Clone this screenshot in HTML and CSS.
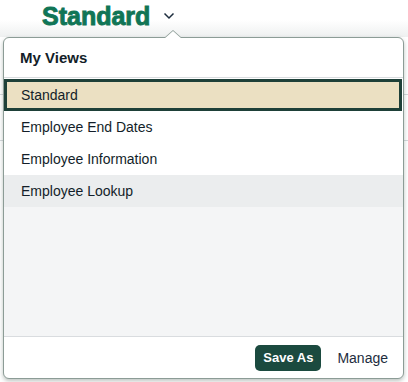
FILE: index.html
```html
<!doctype html>
<html lang="en">
<head>
<meta charset="utf-8" />
<title>My Views</title>
<link rel="stylesheet" href="styles.css">
</head>
<body>

<div class="page">
	<header class="title-bar">
		<h1 class="title">Standard</h1>
		<svg class="chevron" width="12" height="8" viewBox="0 0 12 8">
			<path d="M1.5 1.5 L6 6 L10.5 1.5" fill="none" stroke="#1d2d3e" stroke-width="1.5" />
		</svg>
	</header>

	<div class="backdrop">
		<div class="bd-row first"></div>
		<div class="bd-row"></div>
	</div>

	<div class="popover">
		<div class="pop-head">My Views</div>
		<ul class="views">
			<li class="view selected">Standard</li>
			<li class="view">Employee End Dates</li>
			<li class="view">Employee Information</li>
			<li class="view hover">Employee Lookup</li>
		</ul>
		<div class="filler"></div>
		<footer class="pop-foot">
			<button class="btn primary">Save As</button>
			<button class="btn plain">Manage</button>
		</footer>
	</div>
</div>

</body>
</html>
```

FILE: styles.css
```css
body {
	margin: 0;
	background: #fff;
	font-family: "Liberation Sans", Arial, sans-serif;
	color: #1d2d3e;
}

.page {
	position: relative;
	width: 408px;
	height: 382px;
	overflow: hidden;
}

.title-bar {
	height: 37px;
	display: flex;
	align-items: flex-start;
	padding-left: 42px;
	background: linear-gradient(#fff 20px, #eef0f0 37px);
}
.title {
	margin: 0;
	font-size: 25px;
	line-height: 32px;
	font-weight: bold;
	color: #107556;
	-webkit-text-stroke: 0.9px #107556;
}
.chevron {
	margin: 12px 0 0 13px;
}

/* table lines peeking out behind the popover */
.backdrop {
	padding-top: 20px;
}
.bd-row {
	height: 45px;
	border-bottom: 1px solid #d5d9dc;
}
.bd-row.first {
	height: 37px;
}

.popover {
	position: absolute;
	left: 3px;
	top: 37px;
	width: 399px;
	height: 340px;
	border: 1px solid #8c9c96;
	border-radius: 6px;
	background: #fff;
	box-shadow: 0 2px 4px rgba(60, 80, 70, 0.35);
	display: flex;
	flex-direction: column;
}
.popover::before,
.popover::after {
	content: "";
	position: absolute;
	left: 160px;
	width: 0;
	height: 0;
	border: 9px solid transparent;
	border-top: 0;
}
.popover::before {
	top: -8px;
	border-bottom: 8px solid #8c9c96;
}
.popover::after {
	top: -7px;
	border-bottom: 8px solid #fff;
}

.pop-head {
	height: 39px;
	padding-left: 16px;
	display: flex;
	align-items: center;
	font-size: 15px;
	font-weight: bold;
	color: #131e29;
	border-bottom: 1px solid #d9dcdf;
	border-radius: 6px 6px 0 0;
}

.views {
	list-style: none;
	margin: 0;
	padding: 0;
}
.view {
	height: 32px;
	display: flex;
	align-items: center;
	padding-left: 17px;
	font-size: 14px;
	color: #131e29;
	box-sizing: border-box;
}
.view.selected {
	background: #ebe0c2;
	border: 3px solid #1e4038;
	padding-left: 14px;
	margin: 1px 1px 0 0;
}
.view.hover {
	background: #ebedee;
}

.filler {
	flex: 1;
	background: #f4f5f6;
	border-bottom: 1px solid #d9dcdf;
}

.pop-foot {
	height: 41px;
	display: flex;
	align-items: center;
	justify-content: flex-end;
	gap: 8px;
	padding-right: 7px;
	border-radius: 0 0 6px 6px;
}
.btn {
	font-family: inherit;
	font-size: 14px;
	height: 26px;
	border-radius: 5px;
	border: 0;
	padding: 0 8px;
	cursor: pointer;
}
.btn.primary {
	background: #1b4a3f;
	color: #fff;
	font-size: 13px;
	font-weight: bold;
}
.btn.plain {
	background: none;
	color: #1d2d3e;
}
```
